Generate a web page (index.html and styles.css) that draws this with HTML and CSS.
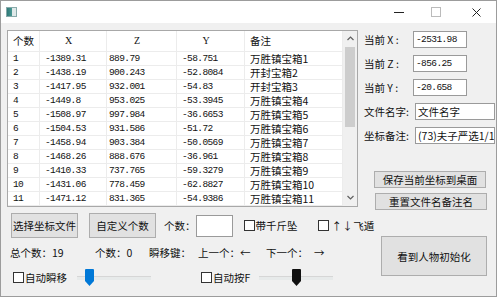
FILE: index.html
```html
<!DOCTYPE html>
<html lang="zh-CN">
<head>
    <meta charset="UTF-8">
    <title>坐标工具</title>
    <link rel="stylesheet" href="styles.css">
</head>
<body>
    <div class="window">
        <div class="titlebar">
            <span class="app-icon"></span>
            <div class="controls">
                <span class="ctl"><span class="min-line"></span></span>
                <span class="ctl"><span class="max-box"></span></span>
                <span class="ctl">
                    <svg width="9" height="9" viewBox="0 0 9 9"><path d="M0.5 0.5 L8.5 8.5 M8.5 0.5 L0.5 8.5" stroke="#222" stroke-width="1"/></svg>
                </span>
            </div>
        </div>

        <div class="content">
            <div class="top">
                <div class="grid-frame">
                    <div class="grid">
                        <div class="hd c-n">个数</div><div class="hd c-c">X</div><div class="hd c-c">Z</div><div class="hd c-c">Y</div><div class="hd c-t">备注</div>
                        <div class="num">1</div><div class="num">-1389.31</div><div class="num z">889.79</div><div class="num">-58.751</div><div class="txt">万胜镇宝箱1</div>
                        <div class="num">2</div><div class="num">-1438.19</div><div class="num z">900.243</div><div class="num">-52.8084</div><div class="txt">开封宝箱2</div>
                        <div class="num">3</div><div class="num">-1417.95</div><div class="num z">932.001</div><div class="num">-54.83</div><div class="txt">开封宝箱3</div>
                        <div class="num">4</div><div class="num">-1449.8</div><div class="num z">953.025</div><div class="num">-53.3945</div><div class="txt">万胜镇宝箱4</div>
                        <div class="num">5</div><div class="num">-1508.97</div><div class="num z">997.984</div><div class="num">-36.6653</div><div class="txt">万胜镇宝箱5</div>
                        <div class="num">6</div><div class="num">-1504.53</div><div class="num z">931.586</div><div class="num">-51.72</div><div class="txt">万胜镇宝箱6</div>
                        <div class="num">7</div><div class="num">-1458.94</div><div class="num z">903.384</div><div class="num">-50.0569</div><div class="txt">万胜镇宝箱7</div>
                        <div class="num">8</div><div class="num">-1468.26</div><div class="num z">888.676</div><div class="num">-36.961</div><div class="txt">万胜镇宝箱8</div>
                        <div class="num">9</div><div class="num">-1410.33</div><div class="num z">737.765</div><div class="num">-59.3279</div><div class="txt">万胜镇宝箱9</div>
                        <div class="num">10</div><div class="num">-1431.06</div><div class="num z">778.459</div><div class="num">-62.8827</div><div class="txt">万胜镇宝箱10</div>
                        <div class="num">11</div><div class="num">-1471.12</div><div class="num z">831.365</div><div class="num">-54.9386</div><div class="txt">万胜镇宝箱11</div>
                    </div>
                    <div class="vscroll">
                        <svg class="arrow" width="7" height="5" viewBox="0 0 7 5"><path d="M0.5 4 L3.5 1 L6.5 4" fill="none" stroke="#606060" stroke-width="1.2"/></svg>
                        <span class="thumb"></span>
                        <span class="track-fill"></span>
                        <svg class="arrow" width="7" height="5" viewBox="0 0 7 5"><path d="M0.5 1 L3.5 4 L6.5 1" fill="none" stroke="#606060" stroke-width="1.2"/></svg>
                    </div>
                </div>

                <div class="side">
                    <div class="field"><span class="lbl coord-lbl">当前 X :</span><span class="edit coord num-font">-2531.98</span></div>
                    <div class="field"><span class="lbl coord-lbl">当前 Z :</span><span class="edit coord num-font">-856.25</span></div>
                    <div class="field"><span class="lbl coord-lbl">当前 Y :</span><span class="edit coord num-font">-20.658</span></div>
                    <div class="field"><span class="lbl name-lbl">文件名字:</span><span class="edit wide">文件名字</span></div>
                    <div class="field"><span class="lbl name-lbl">坐标备注:</span><span class="edit wide">(73)夫子严选1/1</span></div>
                    <div class="btn save-btn">保存当前坐标到桌面</div>
                    <div class="btn reset-btn">重置文件名备注名</div>
                </div>
            </div>

            <div class="bottom">
                <div class="left">
                    <div class="row-a">
                        <div class="btn file-btn">选择坐标文件</div>
                        <div class="btn count-btn">自定义个数</div>
                        <span class="count-lbl">个数：</span>
                        <span class="edit count-edit"></span>
                        <span class="check jack"></span><span class="check-lbl">带千斤坠</span>
                        <span class="check fly"></span><span class="check-lbl fly-lbl">↑ ↓ 飞遁</span>
                    </div>
                    <div class="row-b">
                        <span class="stat-total">总个数：19</span>
                        <span class="stat-count">个数：0</span>
                        <span class="stat-key">瞬移键：</span>
                        <span class="stat-prev">上一个：←</span>
                        <span class="stat-next">下一个：<span class="arrow-key">→</span></span>
                    </div>
                    <div class="row-c">
                        <span class="check auto-tp"></span><span class="check-lbl">自动瞬移</span>
                        <div class="slider slider-one">
                            <span class="track"></span>
                            <svg class="handle" style="left: 8px" width="9" height="17" viewBox="0 0 9 17"><path d="M1 0 H8 Q9 0 9 1 V12 L4.5 17 L0 12 V1 Q0 0 1 0 Z" fill="#0078d7"/></svg>
                        </div>
                        <span class="check auto-f"></span><span class="check-lbl f-lbl">自动按F</span>
                        <div class="slider slider-two">
                            <span class="track"></span>
                            <svg class="handle" style="left: 33px" width="9" height="17" viewBox="0 0 9 17"><path d="M1 0 H8 Q9 0 9 1 V12 L4.5 17 L0 12 V1 Q0 0 1 0 Z" fill="#111"/></svg>
                        </div>
                    </div>
                </div>
                <div class="btn big-btn">看到人物初始化</div>
            </div>
        </div>
    </div>
</body>
</html>
```

FILE: styles.css
```css
body {
    margin: 0;
    background: #fff;
    font-family: "Noto Sans CJK SC", "Noto Sans", sans-serif;
    font-size: 10.5px;
    color: #111;
}

.window {
    width: 497px;
    height: 297px;
    box-sizing: border-box;
    border: 1px solid #9c9c9c;
    background: #f0f0f0;
    display: flex;
    flex-direction: column;
    overflow: hidden;
}

.titlebar {
    height: 22px;
    background: #fff;
    display: flex;
    align-items: center;
    padding-left: 5px;
}

.app-icon {
    width: 11px;
    height: 10px;
    box-sizing: border-box;
    border: 1px solid #8aa;
    background: linear-gradient(90deg, #2f7a78 0, #4c9a96 60%, #dfe9e9 60%);
}

.controls {
    margin-left: auto;
    display: flex;
}

.ctl {
    width: 40px;
    height: 22px;
    display: flex;
    align-items: center;
    justify-content: center;
}

.min-line {
    width: 10px;
    height: 1px;
    background: #222;
    margin-left: 6px;
}

.max-box {
    width: 8px;
    height: 8px;
    border: 1px solid #bbb;
}

.content {
    flex: 1;
    padding: 7px 0 0 6px;
}

/* top: table and side panel */
.top {
    display: flex;
    height: 177px;
}

.grid-frame {
    width: 351px;
    height: 177px;
    box-sizing: border-box;
    border: 1px solid #a8a8a8;
    background: #fff;
    display: flex;
}

.grid {
    display: grid;
    grid-template-columns: 32px 67px 70px 68px 98px;
    grid-template-rows: 21px;
    grid-auto-rows: 14px;
    width: 335px;
}

.grid > div {
    box-sizing: border-box;
    border-right: 1px solid #ececec;
    border-bottom: 1px solid #ececec;
    white-space: nowrap;
    overflow: hidden;
}

.hd {
    line-height: 20px;
    font-size: 10.5px;
}

.c-n {
    padding-left: 5px;
}

.c-c {
    text-align: center;
    padding-right: 9px;
    font-family: "Liberation Serif", serif;
    font-size: 10px;
}

.c-t {
    padding-left: 5px;
}

.num {
    font-family: "Liberation Mono", monospace;
    font-size: 9.5px;
    letter-spacing: -0.6px;
    line-height: 14px;
    padding-left: 5px;
}

.num.z {
    padding-left: 2px;
}

.txt {
    line-height: 13px;
    padding-left: 5px;
}

.vscroll {
    width: 14px;
    background: #f0f0f0;
    display: flex;
    flex-direction: column;
    align-items: center;
}

.vscroll .arrow {
    margin: 5px 0 6px;
}

.thumb {
    width: 10px;
    height: 80px;
    background: #cdcdcd;
}

.track-fill {
    flex: 1;
}

.side {
    margin-left: 6px;
    width: 131px;
    display: flex;
    flex-direction: column;
    gap: 7px;
    padding-top: 1px;
}

.field {
    display: flex;
    align-items: center;
    height: 17px;
}

.lbl {
    white-space: nowrap;
    line-height: 17px;
}

.coord-lbl {
    width: 49px;
}

.name-lbl {
    width: 51px;
}

.edit {
    box-sizing: border-box;
    height: 17px;
    background: #fff;
    border: 1px solid #9a9a9a;
    padding-left: 2px;
    line-height: 15px;
    white-space: nowrap;
    overflow: hidden;
}

.num-font {
    font-family: "Liberation Mono", monospace;
    font-size: 9.5px;
    letter-spacing: -0.6px;
}

.coord {
    width: 54px;
}

.wide {
    width: 80px;
}

.btn {
    box-sizing: border-box;
    background: #e1e1e1;
    border: 1px solid #adadad;
    display: flex;
    align-items: center;
    justify-content: center;
    white-space: nowrap;
}

.save-btn {
    margin: 20px 0 0 10px;
    width: 112px;
    height: 19px;
}

.reset-btn {
    margin: -2px 0 0 11px;
    width: 112px;
    height: 19px;
}

/* bottom area */
.bottom {
    display: flex;
    margin-top: 6px;
}

.left {
    width: 374px;
}

.row-a {
    display: flex;
    align-items: center;
    height: 25px;
}

.file-btn {
    margin-left: 4px;
    width: 67px;
    height: 25px;
}

.count-btn {
    margin-left: 11px;
    width: 67px;
    height: 25px;
}

.count-lbl {
    margin-left: 8px;
}

.count-edit {
    width: 37px;
    height: 22px;
}

.check {
    width: 11px;
    height: 11px;
    box-sizing: border-box;
    border: 1px solid #333;
    background: #fff;
    flex-shrink: 0;
}

.check-lbl {
    margin-left: 1px;
    white-space: nowrap;
}

.jack {
    margin-left: 11px;
}

.fly {
    margin-left: 20px;
}

.fly-lbl {
    margin-left: 3px;
    word-spacing: -2px;
}

.row-b {
    display: flex;
    margin-top: 8px;
    height: 14px;
    line-height: 14px;
    white-space: nowrap;
}

.stat-total {
    margin-left: 3px;
    width: 85px;
}

.stat-count {
    width: 54px;
}

.stat-key {
    width: 49px;
}

.stat-prev {
    width: 68px;
}

.arrow-key {
    margin-left: 6px;
}

.row-c {
    display: flex;
    align-items: center;
    margin-top: 8px;
    height: 18px;
}

.auto-tp {
    margin-left: 6px;
}

.slider {
    position: relative;
    width: 74px;
    height: 18px;
}

.slider-one {
    margin-left: 10px;
}

.slider-two {
    margin-left: 8px;
}

.track {
    position: absolute;
    left: 0;
    right: 0;
    top: 8px;
    height: 3px;
    background: #e7eaea;
    border-top: 1px solid #d6d6d6;
}

.handle {
    position: absolute;
    top: 1px;
}

.auto-f {
    margin-left: 50px;
}

.f-lbl {
    width: 38px;
}

.big-btn {
    margin-top: 23px;
    width: 106px;
    height: 40px;
}
```
